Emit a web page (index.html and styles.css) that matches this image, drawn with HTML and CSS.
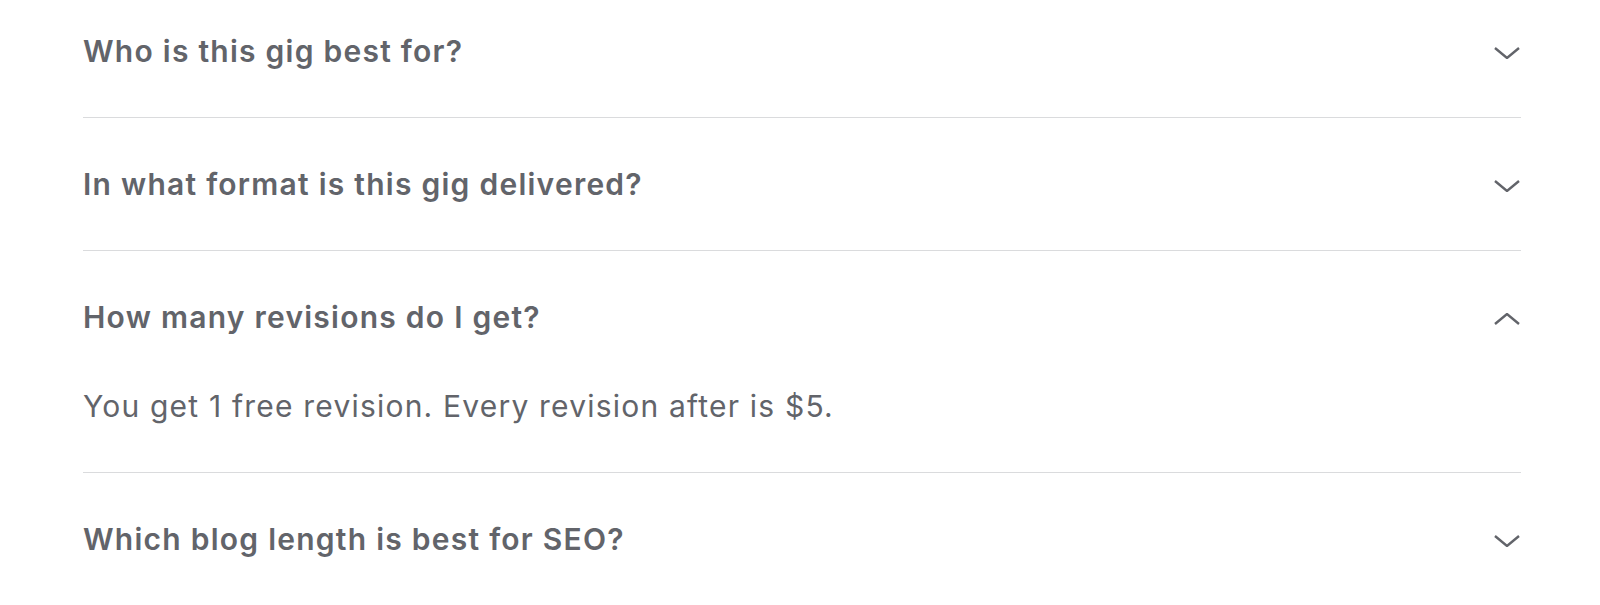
FILE: index.html
```html
<!DOCTYPE html>
<html lang="en">
<head>
    <meta charset="UTF-8">
    <title>FAQ</title>
    <link rel="stylesheet" href="styles.css">
</head>
<body>
    <ul class="faq">
        <li class="faq-item">
            <div class="question">
                <span>Who is this gig best for?</span>
                <svg class="chevron" viewBox="0 0 26 12"><polyline points="1,1 13,11 25,1"/></svg>
            </div>
        </li>
        <li class="faq-item">
            <div class="question">
                <span>In what format is this gig delivered?</span>
                <svg class="chevron" viewBox="0 0 26 12"><polyline points="1,1 13,11 25,1"/></svg>
            </div>
        </li>
        <li class="faq-item open">
            <div class="question">
                <span>How many revisions do I get?</span>
                <svg class="chevron" viewBox="0 0 26 12"><polyline points="1,11 13,1 25,11"/></svg>
            </div>
            <p class="answer">You get 1 free revision. Every revision after is $5.</p>
        </li>
        <li class="faq-item">
            <div class="question">
                <span>Which blog length is best for SEO?</span>
                <svg class="chevron" viewBox="0 0 26 12"><polyline points="1,1 13,11 25,1"/></svg>
            </div>
        </li>
    </ul>
</body>
</html>
```

FILE: styles.css
```css
* {
    margin: 0;
    padding: 0;
    box-sizing: border-box;
}

body {
    font-family: Inter, "Noto Sans", Arial, sans-serif;
    background-color: #fff;
    color: #62646a;
    overflow: hidden;
}

.faq {
    list-style: none;
    width: 1438px;
    margin: -15px 0 0 83px;
}

.faq-item {
    padding: 46px 0;
    border-bottom: 1px solid #dadbdd;
}

.faq-item:last-child {
    border-bottom: none;
}

.question {
    display: flex;
    justify-content: space-between;
    align-items: center;
    height: 40px;
    font-size: 30px;
    font-weight: 600;
    letter-spacing: 1.25px;
}

.chevron {
    width: 26px;
    height: 12px;
    margin: 4px 1px 0 0;
    fill: none;
    stroke: #62646a;
    stroke-width: 2.4;
}

.answer {
    margin-top: 49px;
    line-height: 40px;
    font-size: 30px;
    font-weight: 400;
    letter-spacing: 1.2px;
}
```
